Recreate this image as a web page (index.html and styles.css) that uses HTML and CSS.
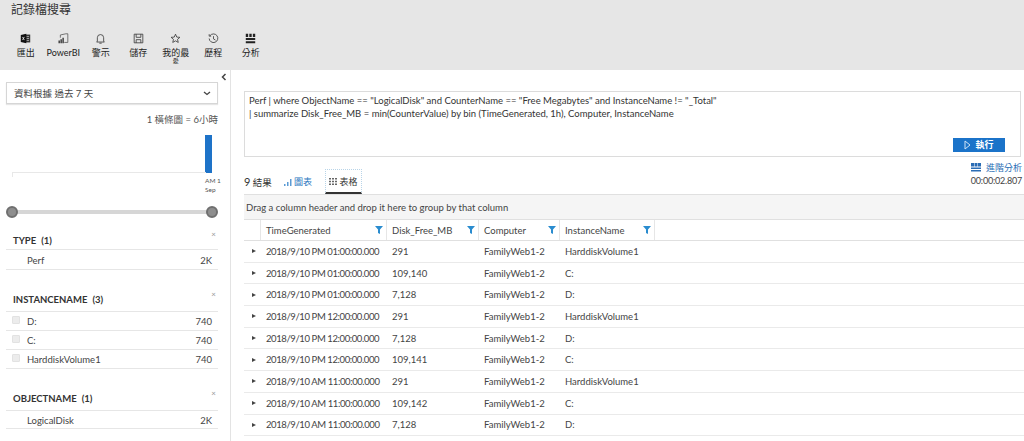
FILE: index.html
```html
<!DOCTYPE html>
<html lang="zh-Hant">
<head>
<meta charset="utf-8">
<title>記錄檔搜尋</title>
<link rel="stylesheet" href="styles.css">
</head>
<body>
<header class="top">
  <h1 class="title">記錄檔搜尋</h1>
  <nav class="tools">
    <div class="tool"><svg class="ico" viewBox="0 0 14 14"><rect x="6" y="2" width="7" height="10" fill="#333"/><path d="M1 2.500 8 1v12l-7-1.500z" fill="#111"/><path d="M3.200 5l2.300 4M5.500 5 3.200 9" stroke="#eee" stroke-width="1"/><path d="M8.500 4.500h3M8.500 7h3M8.500 9.500h3" stroke="#ddd" stroke-width=".8"/></svg><span>匯出</span></div>
    <div class="tool"><svg class="ico" viewBox="0 0 14 14" fill="none"><path d="M3 6V2.500L10 1h2.500v11H8" stroke="#555" stroke-width="1"/><path d="M1.500 13V9.500M4 13V8M6.500 13V6" stroke="#222" stroke-width="1.600"/></svg><span>PowerBI</span></div>
    <div class="tool"><svg class="ico" viewBox="0 0 14 14" fill="none" stroke="#333" stroke-width="1"><path d="M3 10.500V6a4 4 0 0 1 8 0v4.500l1 1H2z"/><path d="M5.500 13h3"/></svg><span>警示</span></div>
    <div class="tool"><svg class="ico" viewBox="0 0 14 14" fill="none" stroke="#333" stroke-width="1"><path d="M1.500 1.500h11v11h-11z"/><path d="M4 1.500v4h6v-4M4 12.500V8.500h6v4"/></svg><span>儲存</span></div>
    <div class="tool"><svg class="ico" viewBox="0 0 14 14" fill="none" stroke="#333" stroke-width="1"><path d="M7 1.500l1.600 3.700 4 .3-3 2.600.9 3.900L7 10l-3.500 2 .9-3.900-3-2.600 4-.3z"/></svg><span class="wrap">我的最<br><small>愛</small></span></div>
    <div class="tool"><svg class="ico" viewBox="0 0 14 14" fill="none" stroke="#333" stroke-width="1"><path d="M2.500 3.500A5.500 5.500 0 1 1 1.500 7"/><path d="M1.500 1.500v2.500H4M7 4v3.500l2.500 1.500"/></svg><span>歷程</span></div>
    <div class="tool"><svg class="ico" viewBox="0 0 14 14" fill="#222"><path d="M1 1h3v4H1zM5.500 1h3v4h-3zM10 1h3v4h-3zM1 6.500h12V9H1zM1 10.500h12V13H1z"/></svg><span>分析</span></div>
  </nav>
</header>
<div class="body">
  <aside class="side">
    <div class="collapse"><svg width="6" height="8" viewBox="0 0 6 8" fill="none" stroke="#444" stroke-width="1.500"><path d="M4.500 1 1.500 4l3 3"/></svg></div>
    <div class="range"><span>資料根據 過去 7 天</span><svg width="8" height="5" viewBox="0 0 8 5" fill="none" stroke="#444" stroke-width="1.300"><path d="M1 1l3 2.500L7 1"/></svg></div>
    <div class="bars">1 橫條圖 = 6小時</div>
    <div class="chart">
      <div class="bar"></div>
      <div class="axis"></div>
      <div class="ticks">AM 1<br>Sep</div>
    </div>
    <div class="slider"><i class="knob"></i><i class="knob"></i></div>
    <section class="facet f1">
      <div class="fhead"><b>TYPE</b><b>(1)</b><span class="x">×</span></div>
      <div class="frow"><span class="nm">Perf</span><span class="ct">2K</span></div>
    </section>
    <section class="facet f2">
      <div class="fhead"><b>INSTANCENAME</b><b>(3)</b><span class="x">×</span></div>
      <div class="frow"><i class="cb"></i><span>D:</span><span class="ct">740</span></div>
      <div class="frow"><i class="cb"></i><span>C:</span><span class="ct">740</span></div>
      <div class="frow"><i class="cb"></i><span>HarddiskVolume1</span><span class="ct">740</span></div>
    </section>
    <section class="facet f3">
      <div class="fhead"><b>OBJECTNAME</b><b>(1)</b><span class="x">×</span></div>
      <div class="frow"><span class="nm">LogicalDisk</span><span class="ct">2K</span></div>
    </section>
  </aside>
  <main class="main">
    <div class="query">
      <p>Perf | where ObjectName == "LogicalDisk" and CounterName == "Free Megabytes" and InstanceName != "_Total"</p>
      <p>| summarize Disk_Free_MB = min(CounterValue) by bin (TimeGenerated, 1h), Computer, InstanceName</p>
      <div class="run"><svg width="7" height="10" viewBox="0 0 7 10" fill="none" stroke="#cfe3f6" stroke-width="1"><path d="M1 1l5 4-5 4z"/></svg><span>執行</span></div>
    </div>
    <div class="tabs">
      <div class="left">
        <span class="count"><em>9</em> 結果</span>
        <span class="tab chart-tab"><svg width="8" height="8" viewBox="0 0 8 8" fill="#5b9bd5"><path d="M0 6h1.500v2H0zM3 4h1.500v4H3zM6 1h1.500v7H6z"/></svg>圖表</span>
        <span class="tab active"><svg width="8" height="7" viewBox="0 0 8 7" fill="#666"><path d="M0 0h2v1.500H0zM3 0h2v1.500H3zM6 0h2v1.500H6zM0 2.700h2v1.500H0zM3 2.700h2v1.500H3zM6 2.700h2v1.500H6zM0 5.400h2v1.500H0zM3 5.400h2v1.500H3zM6 5.400h2v1.500H6z"/></svg>表格</span>
      </div>
      <div class="right">
        <span class="adv"><svg width="10" height="9" viewBox="0 0 10 9" fill="#2a6db5"><path d="M0 0h3v3.500H0zM3.500 0h3v3.500h-3zM7 0h3v3.500H7zM0 4.500h10V6H0zM0 7h10v1.500H0z"/></svg>進階分析</span>
        <span class="time">00:00:02.807</span>
      </div>
    </div>
    <div class="group">Drag a column header and drop it here to group by that column</div>
    <div class="grid ghead">
      <span></span>
      <span class="h">TimeGenerated<svg class="flt" viewBox="0 0 8 8"><path d="M0 0h8L5 3.500V8L3 7V3.500z"/></svg></span>
      <span class="h">Disk_Free_MB<svg class="flt" viewBox="0 0 8 8"><path d="M0 0h8L5 3.500V8L3 7V3.500z"/></svg></span>
      <span class="h">Computer<svg class="flt" viewBox="0 0 8 8"><path d="M0 0h8L5 3.500V8L3 7V3.500z"/></svg></span>
      <span class="h">InstanceName<svg class="flt" viewBox="0 0 8 8"><path d="M0 0h8L5 3.500V8L3 7V3.500z"/></svg></span>
    </div>
    <div class="grid row"><i class="arr"></i><span class="d">2018/9/10 PM 01:00:00.000</span><span>291</span><span>FamilyWeb1-2</span><span>HarddiskVolume1</span></div>
    <div class="grid row"><i class="arr"></i><span class="d">2018/9/10 PM 01:00:00.000</span><span>109,140</span><span>FamilyWeb1-2</span><span>C:</span></div>
    <div class="grid row"><i class="arr"></i><span class="d">2018/9/10 PM 01:00:00.000</span><span>7,128</span><span>FamilyWeb1-2</span><span>D:</span></div>
    <div class="grid row"><i class="arr"></i><span class="d">2018/9/10 PM 12:00:00.000</span><span>291</span><span>FamilyWeb1-2</span><span>HarddiskVolume1</span></div>
    <div class="grid row"><i class="arr"></i><span class="d">2018/9/10 PM 12:00:00.000</span><span>7,128</span><span>FamilyWeb1-2</span><span>D:</span></div>
    <div class="grid row"><i class="arr"></i><span class="d">2018/9/10 PM 12:00:00.000</span><span>109,141</span><span>FamilyWeb1-2</span><span>C:</span></div>
    <div class="grid row"><i class="arr"></i><span class="d">2018/9/10 AM 11:00:00.000</span><span>291</span><span>FamilyWeb1-2</span><span>HarddiskVolume1</span></div>
    <div class="grid row"><i class="arr"></i><span class="d">2018/9/10 AM 11:00:00.000</span><span>109,142</span><span>FamilyWeb1-2</span><span>C:</span></div>
    <div class="grid row"><i class="arr"></i><span class="d">2018/9/10 AM 11:00:00.000</span><span>7,128</span><span>FamilyWeb1-2</span><span>D:</span></div>
  </main>
</div>
</body>
</html>
```
FILE: styles.css
```css
* { box-sizing: border-box; }
html, body { margin: 0; height: 441px; overflow: hidden; }
body { font-family: Lato, "Noto Sans CJK TC", sans-serif; font-size: 9.5px; color: #444; background: #fff; }
.top { height: 70px; background: #e6e6e6; padding: 0 0 0 11px; }
.title { margin: 0; font-size: 12px; font-weight: 400; color: #333; line-height: 20px; }
.tools { display: flex; margin: 12px 0 0 -4px; }
.tool { width: 37.5px; display: flex; flex-direction: column; align-items: center; font-size: 9px; color: #222; line-height: 12px; white-space: nowrap; }
.tool span { margin-top: 2px; }
.ico { width: 11px; height: 11px; margin: 1px 0; }
.tool .wrap { line-height: 8px; text-align: center; margin-top: 4px; }
.wrap small { font-size: 6px; display: block; }
.body { display: flex; height: 371px; }
.side { width: 231px; border-right: 1px solid #e3e3e3; padding: 0 12px 0 6px; position: relative; flex: none; }
.collapse { position: absolute; top: 3px; right: 3px; line-height: 0; }
.range { margin-top: 12px; height: 22px; border: 1px solid #d6d6d6; box-shadow: 0 1px 1px #e6e6e6; display: flex; align-items: center; justify-content: space-between; padding: 0 6px 0 7px; color: #444; }
.bars { margin-top: 9px; text-align: right; line-height: 14px; color: #555; white-space: nowrap; }
.chart { height: 63px; margin-top: 8px; position: relative; }
.bar { position: absolute; left: 199px; top: 0; width: 7px; height: 38px; background: #1e73c8; }
.axis { position: absolute; left: 6px; top: 37px; width: 194px; height: 5px; border: 1px solid #e8e8e8; border-width: 1px 0 0 1px; }
.ticks { position: absolute; left: 199px; top: 41px; white-space: nowrap; font-size: 6.500px; line-height: 9px; color: #555; }
.slider { height: 12px; margin-top: 8px; position: relative; display: flex; justify-content: space-between; align-items: center; }
.slider::before { content: ""; position: absolute; left: 6px; right: 6px; top: 4px; height: 4px; background: #d6d6d6; }
.knob { position: relative; width: 12px; height: 12px; border-radius: 50%; background: #8e8e8e; border: 2px solid #6f6f6f; }
.f1 { margin-top: 9px; }
.f2, .f3 { margin-top: 19px; }
.fhead { height: 23px; display: flex; gap: 5px; align-items: center; padding: 0 0 1px 7px; border-bottom: 1px solid #e6e6e6; position: relative; color: #333; }
.f1 .fhead { padding: 4px 0 0 7px; }
.fhead b { font-weight: 700; }
.x { position: absolute; right: 2px; top: 1px; font-size: 8px; line-height: 8px; color: #999; }
.f1 .x { top: 3px; }
.frow { height: 19px; display: flex; align-items: center; padding: 0 6px 0 21px; border-bottom: 1px solid #e6e6e6; position: relative; }
.f1 .frow { height: 20px; padding-top: 1px; }
.f3 .frow { height: 18px; padding-top: 1px; }
.ct { margin-left: auto; }
.cb { position: absolute; left: 6px; top: 4px; width: 8px; height: 8px; background: #ececec; border: 1px solid #e2e2e2; border-radius: 1px; }
.main { flex: 1; padding: 21px 0 0 13px; min-width: 0; }
.query { height: 66px; margin-right: 3px; border: 1px solid #dcdcdc; padding: 3px 4px; position: relative; line-height: 12.500px; color: #333; }
.query p { margin: 0; white-space: nowrap; }
.run { position: absolute; right: 15px; bottom: 4px; width: 52px; height: 14px; background: #1b73c9; color: #fff; display: flex; align-items: center; justify-content: center; gap: 4px; font-size: 9px; font-weight: 700; }
.tabs { display: flex; justify-content: space-between; height: 38px; border-bottom: 1px solid #e0e0e0; }
.left { display: flex; align-items: flex-start; padding: 12px 0 0 0; }
.count { color: #333; line-height: 25px; width: 40px; }
.count em { font-style: normal; font-size: 11px; }
.tab { display: flex; align-items: center; gap: 2px; height: 25px; font-size: 9px; }
.chart-tab { color: #2a77c0; width: 41px; }
.active { width: 37px; justify-content: center; color: #333; border: 1px dotted #b8d4e8; border-bottom: 2px solid #333; }
.right { display: flex; flex-direction: column; align-items: flex-end; padding: 4px 2px 0 0; line-height: 13px; }
.adv { color: #2a6db5; font-size: 9px; display: flex; align-items: center; gap: 5px; }
.time { font-size: 9px; letter-spacing: -.2px; color: #444; }
.group { height: 25px; background: #f5f5f5; border-bottom: 1px solid #e0e0e0; padding-left: 2px; display: flex; align-items: center; color: #444; }
.grid { display: grid; grid-template-columns: 16px 126px 92px 81px 96px; align-items: stretch; }
.ghead { height: 21px; border-bottom: 1px solid #e0e0e0; }
.h { display: flex; align-items: center; justify-content: space-between; padding: 0 3px 0 5px; border-left: 1px solid #e6e6e6; color: #444; }
.h:last-child { border-right: 1px solid #e6e6e6; }
.flt { width: 8px; height: 8px; fill: #2a8ccf; }
.row { height: 21.700px; border-bottom: 1px solid #eaeaea; align-items: center; color: #444; }
.row span { padding-left: 6px; white-space: nowrap; }
.row .d { letter-spacing: -.4px; }
.arr { justify-self: center; width: 0; height: 0; border-left: 4px solid #444; border-top: 2.500px solid transparent; border-bottom: 2.500px solid transparent; margin-left: 4px; }
```
